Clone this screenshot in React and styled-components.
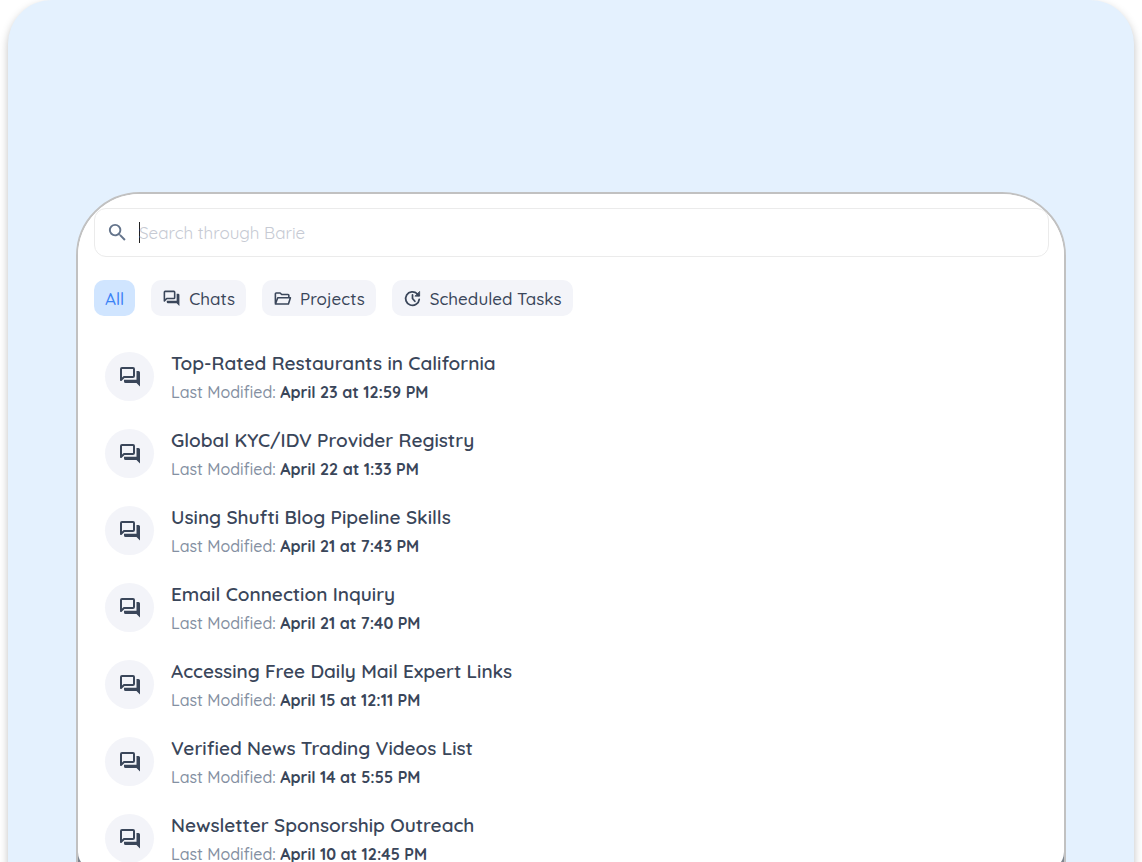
import React, { useState } from 'react';
import styled, { createGlobalStyle } from 'styled-components';
import { MdSearch } from 'react-icons/md';

const ChatIcon = () => (
  <svg viewBox="0 0 24 24" fill="none" aria-hidden="true">
    <path d="M4 3h11a1 1 0 0 1 1 1v7a1 1 0 0 1-1 1H6l-3 3V4a1 1 0 0 1 1-1z" stroke="currentColor" strokeWidth="2" strokeLinejoin="round" />
    <path d="M18.500 6h2A1.500 1.500 0 0 1 22 7.500V21.500L18.500 18H7.500A1.500 1.500 0 0 1 6 16.500V14.800h12.500z" fill="currentColor" />
  </svg>
);

const FolderIcon = () => (
  <svg viewBox="0 0 24 24" fill="none" stroke="currentColor" strokeWidth="2" strokeLinejoin="round" aria-hidden="true">
    <path d="M3 18V6a1 1 0 0 1 1-1h5l2 2h8a1 1 0 0 1 1 1v3" />
    <path d="M3 19l3-8h16l-2.500 8z" />
  </svg>
);

const ScheduleIcon = () => (
  <svg viewBox="0 0 24 24" fill="none" stroke="currentColor" strokeWidth="2.200" strokeLinecap="round" strokeLinejoin="round" aria-hidden="true">
    <path d="M20.500 13A8.600 8.600 0 1 1 18 6l2 2" />
    <path d="M21 3.500V9h-5.500z" fill="currentColor" strokeWidth="1" />
    <path d="M12 7.500V12l3 3.500" />
  </svg>
);

const tabs = [
  { name: 'All' },
  { name: 'Chats', Icon: ChatIcon },
  { name: 'Projects', Icon: FolderIcon },
  { name: 'Scheduled Tasks', Icon: ScheduleIcon },
];

const chats = [
  { id: 1, title: 'Top-Rated Restaurants in California', date: 'April 23 at 12:59 PM' },
  { id: 2, title: 'Global KYC/IDV Provider Registry', date: 'April 22 at 1:33 PM' },
  { id: 3, title: 'Using Shufti Blog Pipeline Skills', date: 'April 21 at 7:43 PM' },
  { id: 4, title: 'Email Connection Inquiry', date: 'April 21 at 7:40 PM' },
  { id: 5, title: 'Accessing Free Daily Mail Expert Links', date: 'April 15 at 12:11 PM' },
  { id: 6, title: 'Verified News Trading Videos List', date: 'April 14 at 5:55 PM' },
  { id: 7, title: 'Newsletter Sponsorship Outreach', date: 'April 10 at 12:45 PM' },
];

const App = () => {
  const [active, setActive] = useState('All');
  const [query, setQuery] = useState('');

  return (
    <>
      <GlobalStyle />
      <Page>
        <Backdrop>
          <Frame>
            <Panel>
              <SearchBox>
                <MdSearch />
                {!query && <Caret />}
                <SearchInput
                  aria-label="Search through Barie"
                  placeholder="Search through Barie"
                  value={query}
                  $empty={!query}
                  onChange={(e) => setQuery(e.target.value)}
                />
              </SearchBox>
              <Tabs>
                {tabs.map(({ name, Icon }) => (
                  <Tab key={name} type="button" $active={active === name} onClick={() => setActive(name)}>
                    {Icon && <Icon />}
                    {name}
                  </Tab>
                ))}
              </Tabs>
              <List>
                {chats.map((chat) => (
                  <Row key={chat.id}>
                    <Avatar><ChatIcon /></Avatar>
                    <div>
                      <Title>{chat.title}</Title>
                      <Modified>Last Modified: <time>{chat.date}</time></Modified>
                    </div>
                  </Row>
                ))}
              </List>
            </Panel>
          </Frame>
        </Backdrop>
      </Page>
    </>
  );
};

const GlobalStyle = createGlobalStyle`
  * {
    box-sizing: border-box;
  }
  body {
    margin: 0;
    background: #fff;
    color: #3a465a;
    font-family: Quicksand, Lato, sans-serif;
  }
`;

const Page = styled.main`
  height: 100vh;
  padding: 0 8px;
  overflow: hidden;
`;

const Backdrop = styled.div`
  padding: 192px 68px 64px;
  border-radius: 44px;
  background: #e4f1fe;
  box-shadow: 0 4px 8px rgba(0, 0, 0, 0.25);
`;

const Frame = styled.section`
  border: 2px solid #c1c1c1;
  border-radius: 64px 64px 0 0;
  background: linear-gradient(#fff 50%, #7d858f 50%);
  overflow: hidden;
`;

const Panel = styled.div`
  padding: 14px 15px 4px 16px;
  border-radius: 0 0 18px 18px;
  background: #fff;
`;

const SearchBox = styled.label`
  display: flex;
  align-items: center;
  height: 49px;
  padding: 0 11px;
  border: 1px solid #ebebeb;
  border-radius: 12px;

  svg {
    width: 23px;
    height: 23px;
    margin-right: 10px;
    color: #64748b;
  }
`;

const Caret = styled.span`
  width: 1px;
  height: 21px;
  margin-right: -1px;
  background: #222;
`;

const SearchInput = styled.input`
  flex: 1;
  padding: 0;
  border: 0;
  outline: 0;
  background: none;
  color: #3a465a;
  caret-color: ${({ $empty }) => ($empty ? 'transparent' : '#222')};
  font: 400 17px Quicksand, Lato, sans-serif;

  &::placeholder {
    color: #c6cad3;
  }
`;

const Tabs = styled.div`
  display: flex;
  gap: 16px;
  margin-top: 23px;
`;

const Tab = styled.button`
  display: flex;
  align-items: center;
  gap: 8px;
  height: 36px;
  padding: 0 11px;
  border: 0;
  border-radius: 10px;
  background: ${({ $active }) => ($active ? '#d0e5ff' : '#f3f4f9')};
  color: ${({ $active }) => ($active ? '#3b82f6' : '#3a465a')};
  font: 500 17px Quicksand, Lato, sans-serif;
  cursor: pointer;

  svg {
    width: 19px;
    height: 19px;
  }
`;

const List = styled.ul`
  display: flex;
  flex-direction: column;
  gap: 25px;
  margin: 36px 0 0;
  padding: 0 11px;
  list-style: none;
`;

const Row = styled.li`
  display: flex;
  gap: 17px;
`;

const Avatar = styled.div`
  display: grid;
  place-items: center;
  width: 49px;
  height: 49px;
  border-radius: 50%;
  background: #f3f4f9;

  svg {
    width: 24px;
    height: 24px;
  }
`;

const Title = styled.h2`
  margin: 0 0 6px;
  font-size: 19px;
  font-weight: 600;
  line-height: 22px;
`;

const Modified = styled.p`
  margin: 0;
  color: #8490a2;
  font-size: 16px;
  font-weight: 500;
  line-height: 24px;

  time {
    color: #3a465a;
    font-weight: 700;
  }
`;

export default App;
